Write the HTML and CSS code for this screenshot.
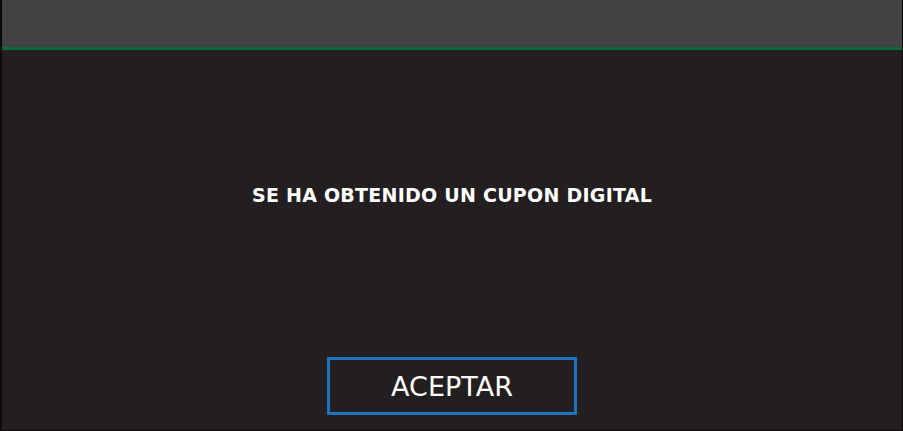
FILE: index.html
```html
<!DOCTYPE html>
<html lang="es">
<head>
    <meta charset="UTF-8">
    <meta name="viewport" content="width=device-width, initial-scale=1.0">
    <title>Cupon digital</title>
    <link rel="stylesheet" href="styles.css">
</head>
<body>
    <div class="modal">
        <div class="modal-header"></div>
        <div class="modal-body">
            <p class="message">SE HA OBTENIDO UN CUPON DIGITAL</p>
            <button type="button" class="btn-accept">ACEPTAR</button>
        </div>
    </div>
</body>
</html>
```

FILE: styles.css
```css
html, body {
    height: 100%;
}

body {
    margin: 0;
    padding: 0 1px 1px 2px;
    box-sizing: border-box;
    background-color: #0b0b0b;
    font-family: "DejaVu Sans", "Liberation Sans", sans-serif;
}

.modal {
    height: 100%;
    display: flex;
    flex-direction: column;
    background-color: #231f20;
}

.modal-header {
    height: 47px;
    background-color: #434345;
    border-bottom: 3px solid #076b38;
}

.modal-body {
    flex: 1;
    display: flex;
    flex-direction: column;
    align-items: center;
}

.message {
    margin: 134px 0 0;
    color: #fff;
    font-size: 19px;
    font-weight: bold;
    line-height: 22px;
    letter-spacing: 0.25px;
}

.btn-accept {
    margin-top: 151px;
    width: 250px;
    height: 58px;
    background: transparent;
    border: 3px solid #1f74be;
    color: #fff;
    font-family: "DejaVu Sans", "Liberation Sans", sans-serif;
    font-size: 27px;
    padding: 0;
    cursor: pointer;
}
```
